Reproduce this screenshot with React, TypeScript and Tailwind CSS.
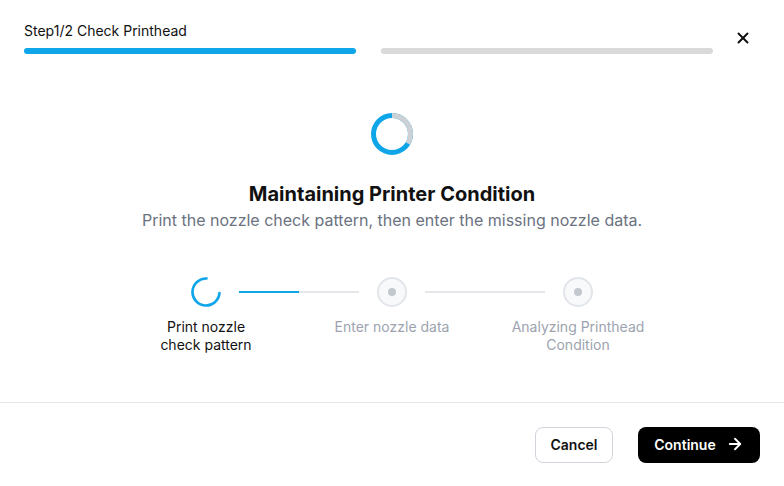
import React from "react";
import { X, ArrowRight } from "lucide-react";

function BigSpinner() {
  const r = 18.5;
  const c = 2 * Math.PI * r;
  return (
    <svg width="42" height="42" viewBox="0 0 42 42">
      <circle cx="21" cy="21" r={r} fill="none" stroke="#0ea5e9" strokeWidth="5" />
      <circle
        cx="21"
        cy="21"
        r={r}
        fill="none"
        stroke="#cdd1d6"
        strokeWidth="5"
        strokeDasharray={`${c / 3} ${c}`}
        transform="rotate(-90 21 21)"
      />
    </svg>
  );
}

function StepSpinner() {
  const r = 13.5;
  const c = 2 * Math.PI * r;
  return (
    <svg width="30" height="30" viewBox="0 0 30 30">
      <circle
        cx="15"
        cy="15"
        r={r}
        fill="none"
        stroke="#0ea5e9"
        strokeWidth="2.6"
        strokeLinecap="round"
        strokeDasharray={`${c * 0.74} ${c}`}
        transform="rotate(4 15 15)"
      />
    </svg>
  );
}

function PendingDot() {
  return (
    <div className="w-[30px] h-[30px] rounded-full border-2 border-[#e2e5ea] bg-[#f8f9fb] flex items-center justify-center">
      <div className="w-[8px] h-[8px] rounded-full bg-[#c3c8cf]" />
    </div>
  );
}

export default function App() {
  return (
    <div
      className="w-[784px] h-[486px] bg-white flex flex-col text-[#111]"
      style={{ fontFamily: "Inter, 'Noto Sans', sans-serif" }}
    >
      <div className="flex items-start pl-6 pr-[32px] pt-[21px]">
        <div className="flex flex-col">
          <div className="text-[14px] leading-[20px] text-[#111]">Step1/2 Check Printhead</div>
          <div className="flex gap-[25px] mt-[7px]">
            <div className="w-[332px] h-[6px] rounded-full bg-[#0ea5e9]" />
            <div className="w-[332px] h-[6px] rounded-full bg-[#d9d9d9]" />
          </div>
        </div>
        <div className="ml-auto mt-[8px]">
          <X size={18} strokeWidth={2.6} color="#111" />
        </div>
      </div>

      <div className="flex flex-col items-center mt-[59px]">
        <BigSpinner />
        <div className="mt-[25px] text-[20px] leading-[28px] font-bold text-[#111]">
          Maintaining Printer Condition
        </div>
        <div className="text-[16px] leading-[24px] text-[#6b7280]">
          Print the nozzle check pattern, then enter the missing nozzle data.
        </div>

        <div className="mt-[45px] flex items-center gap-[18px]">
          <StepSpinner />
          <div className="w-[120px] h-[2px] flex">
            <div className="w-[60px] h-[2px] bg-[#0ea5e9]" />
            <div className="w-[60px] h-[2px] bg-[#e5e7eb]" />
          </div>
          <PendingDot />
          <div className="w-[120px] h-[2px] bg-[#e5e7eb]" />
          <PendingDot />
        </div>
        <div className="flex mt-[11px] text-[14px] leading-[18px]">
          <div className="w-[186px] text-center text-[#111]">
            Print nozzle
            <br />
            check pattern
          </div>
          <div className="w-[186px] text-center text-[#9ca3af]">Enter nozzle data</div>
          <div className="w-[186px] text-center text-[#9ca3af]">
            Analyzing Printhead
            <br />
            Condition
          </div>
        </div>
      </div>

      <div className="mt-auto border-t border-[#e5e7eb] h-[84px] flex items-center justify-end gap-[25px] pr-[24px]">
        <button className="h-[36px] w-[78px] rounded-lg border border-[#d1d5db] bg-white text-[14px] font-semibold text-[#111] pb-[1px]">
          Cancel
        </button>
        <button className="h-[36px] w-[122px] rounded-lg bg-black text-white text-[14px] font-semibold flex items-center justify-center gap-[10px] pb-[1px]">
          Continue
          <ArrowRight size={18} strokeWidth={2.4} />
        </button>
      </div>
    </div>
  );
}
